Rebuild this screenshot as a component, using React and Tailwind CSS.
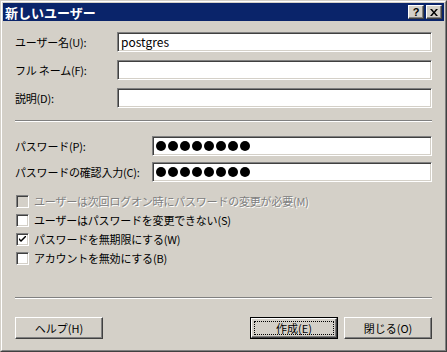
import React from "react";

const FONT = { fontFamily: '"Noto Sans CJK JP", "Liberation Sans", sans-serif' };

const sunken =
  "border border-t-[#808080] border-l-[#808080] border-b-white border-r-white shadow-[inset_1px_1px_0_#404040,inset_-1px_-1px_0_#d4d0c8]";
const raised =
  "border border-t-white border-l-white border-b-[#404040] border-r-[#404040] shadow-[inset_-1px_-1px_0_#808080,inset_1px_1px_0_#d4d0c8]";

function Field({ label, value, labelW }) {
  return (
    <div className="flex items-center">
      <div className={`${labelW} shrink-0 whitespace-nowrap text-[11px] tracking-[-0.2px] leading-none`}>{label}</div>
      <div className={`flex-1 h-[20px] bg-white ${sunken} flex items-center px-[3px] text-[12px]`}>{value}</div>
    </div>
  );
}

function Dots() {
  return (
    <div className="flex gap-[2px]">
      {[0, 1, 2, 3, 4, 5, 6, 7].map((i) => (
        <span key={i} className="w-[10px] h-[10px] rounded-full bg-black" />
      ))}
    </div>
  );
}

function Check({ label, checked, disabled }) {
  return (
    <div className="flex items-center h-[19px]">
      <div className={`w-[13px] h-[13px] ${disabled ? "bg-[#d4d0c8]" : "bg-white"} ${sunken} flex items-center justify-center`}>
        {checked && (
          <svg width="7" height="7" viewBox="0 0 7 7">
            <path d="M0 2 L0 4 L2 6 L7 1 L7 -1 L2 4 Z" fill="black" />
          </svg>
        )}
      </div>
      <span className={`ml-[5px] whitespace-nowrap text-[11px] tracking-[-0.2px] leading-none ${disabled ? "text-[#808080] [text-shadow:1px_1px_0_#fff]" : "text-black"}`}>{label}</span>
    </div>
  );
}

function Button({ children, def }) {
  if (def) {
    return (
      <div className="w-[88px] h-[22px] border border-black">
        <div className={`w-full h-full bg-[#d4d0c8] ${raised} flex items-center justify-center p-[2px]`}>
          <div className="w-full h-full border border-dotted border-black flex items-center justify-center text-[11px]">{children}</div>
        </div>
      </div>
    );
  }
  return (
    <div className={`w-[88px] h-[22px] bg-[#d4d0c8] ${raised} flex items-center justify-center text-[11px]`}>{children}</div>
  );
}

export default function App() {
  return (
    <div className="w-[447px] h-[352px] bg-[#d4d0c8] text-black" style={FONT}>
      <div className="w-full h-full border border-t-[#d4d0c8] border-l-[#d4d0c8] border-b-[#404040] border-r-[#404040]">
        <div className="w-full h-full border border-t-white border-l-white border-b-[#808080] border-r-[#808080] p-[1px] flex flex-col">
          {/* Title bar */}
          <div className="h-[18px] bg-[#0a246a] flex items-center pl-[2px] pr-[2px]">
            <span className="text-white font-bold text-[13px] leading-none">新しいユーザー</span>
            <div className="ml-auto flex">
              <div className={`w-[16px] h-[14px] bg-[#d4d0c8] ${raised} flex items-center justify-center text-[11px] font-bold leading-none`} style={{ fontFamily: '"Liberation Sans", sans-serif' }}>?</div>
              <div className={`ml-[2px] w-[16px] h-[14px] bg-[#d4d0c8] ${raised} flex items-center justify-center`}>
                <svg width="8" height="7" viewBox="0 0 8 7">
                  <path d="M0 0h2l2 2.5L6 0h2L5 3.5 8 7H6L4 4.5 2 7H0l3-3.5z" fill="black" />
                </svg>
              </div>
            </div>
          </div>

          {/* Body */}
          <div className="flex-1 pl-[12px] pr-[12px] pt-[11px] flex flex-col">
            <div className="flex flex-col gap-[8px]">
              <Field label="ユーザー名(U):" value="postgres" labelW="w-[102px]" />
              <Field label="フル ネーム(F):" value="" labelW="w-[102px]" />
              <Field label="説明(D):" value="" labelW="w-[102px]" />
            </div>

            <div className="mt-[12px] border-t border-t-[#808080] border-b border-b-white" />

            <div className="mt-[14px] flex flex-col gap-[6px]">
              <Field label="パスワード(P):" value={<Dots />} labelW="w-[137px]" />
              <Field label="パスワードの確認入力(C):" value={<Dots />} labelW="w-[137px]" />
            </div>

            <div className="mt-[10px] pl-[1px] flex flex-col">
              <Check label="ユーザーは次回ログオン時にパスワードの変更が必要(M)" disabled />
              <Check label="ユーザーはパスワードを変更できない(S)" />
              <Check label="パスワードを無期限にする(W)" checked />
              <Check label="アカウントを無効にする(B)" />
            </div>

            <div className="mt-[29px] border-t border-t-[#808080] border-b border-b-white" />

            <div className="mt-[18px] flex items-center">
              <Button>ヘルプ(H)</Button>
              <div className="ml-auto flex gap-[6px]">
                <Button def>作成(E)</Button>
                <Button>閉じる(O)</Button>
              </div>
            </div>
          </div>
        </div>
      </div>
    </div>
  );
}
